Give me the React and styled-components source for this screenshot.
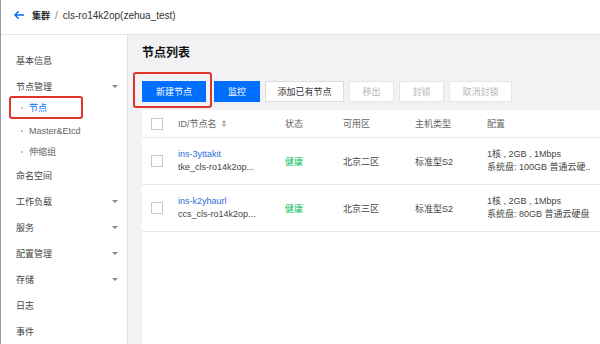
import React from 'react';
import styled, { createGlobalStyle, css } from 'styled-components';

const GlobalStyle = createGlobalStyle`
    html, body {
        margin: 0;
        padding: 0;
        background: #ffffff;
    }
    body {
        width: 600px;
        height: 344px;
        overflow: hidden;
        font-family: "Liberation Sans", "Noto Sans CJK SC", sans-serif;
        font-size: 9px;
        color: #333333;
    }
`;

const navItems = [
    { label: '基本信息' },
    { label: '节点管理', caret: true, children: [
        { label: '节点', active: true },
        { label: 'Master&Etcd' },
        { label: '伸缩组' },
    ] },
    { label: '命名空间' },
    { label: '工作负载', caret: true },
    { label: '服务', caret: true },
    { label: '配置管理', caret: true },
    { label: '存储', caret: true },
    { label: '日志' },
    { label: '事件' },
];

const nodes = [
    { id: 'ins-3yttakit', name: 'tke_cls-ro14k2op...', status: '健康', zone: '北京二区', type: '标准型S2', spec: '1核 , 2GB , 1Mbps', disk: '系统盘: 100GB 普通云硬..' },
    { id: 'ins-k2yhaurl', name: 'ccs_cls-ro14k2op...', status: '健康', zone: '北京三区', type: '标准型S2', spec: '1核 , 2GB , 1Mbps', disk: '系统盘: 80GB 普通云硬盘' },
];

export default function App() {
    return (
        <>
            <GlobalStyle />
            <Page>
                <Header>
                    <BackIcon viewBox="0 0 12 10" width="11" height="10">
                        <path d="M5 1 L1 5 L5 9 M1 5 H11" fill="none" stroke="#006eff" strokeWidth="1.6" />
                    </BackIcon>
                    <Crumb>集群</Crumb>
                    <Slash>/</Slash>
                    <ClusterName>cls-ro14k2op(zehua_test)</ClusterName>
                </Header>
                <Body>
                    <Sidebar>
                        {navItems.map((item) => (
                            <React.Fragment key={item.label}>
                                <NavItem>
                                    {item.label}
                                    {item.caret && <Caret />}
                                </NavItem>
                                {item.children && item.children.map((sub) => (
                                    <SubItem key={sub.label} $active={sub.active}>
                                        <Dot />
                                        {sub.label}
                                    </SubItem>
                                ))}
                            </React.Fragment>
                        ))}
                    </Sidebar>
                    <Main>
                        <Title>节点列表</Title>
                        <Toolbar>
                            <Highlight>
                                <Button $variant="primary" $width={64}>新建节点</Button>
                            </Highlight>
                            <Button $variant="primary" $width={46}>监控</Button>
                            <Button $width={79}>添加已有节点</Button>
                            <Button $variant="disabled" $width={45}>移出</Button>
                            <Button $variant="disabled" $width={45}>封锁</Button>
                            <Button $variant="disabled" $width={63}>取消封锁</Button>
                        </Toolbar>
                        <Card>
                            <HeadRow>
                                <Cell><Checkbox /></Cell>
                                <Cell>ID/节点名<SortIcon /></Cell>
                                <Cell>状态</Cell>
                                <Cell>可用区</Cell>
                                <Cell>主机类型</Cell>
                                <Cell>配置</Cell>
                            </HeadRow>
                            {nodes.map((n) => (
                                <Row key={n.id}>
                                    <Cell><Checkbox /></Cell>
                                    <Cell>
                                        <Stack>
                                            <Link>{n.id}</Link>
                                            <Line>{n.name}</Line>
                                        </Stack>
                                    </Cell>
                                    <Cell><Status>{n.status}</Status></Cell>
                                    <Cell>{n.zone}</Cell>
                                    <Cell>{n.type}</Cell>
                                    <Cell>
                                        <Stack>
                                            <Line>{n.spec}</Line>
                                            <Line>{n.disk}</Line>
                                        </Stack>
                                    </Cell>
                                </Row>
                            ))}
                        </Card>
                    </Main>
                </Body>
            </Page>
        </>
    );
}

const Page = styled.div`
    height: 344px;
    display: grid;
    grid-template-rows: 35px 1fr;
    border-left: 1px solid #9a9a9a;
    box-sizing: border-box;
`;

const Header = styled.header`
    display: flex;
    align-items: center;
    padding: 0 0 4px 13px;
    border-bottom: 1px solid #e6e6e6;
    box-sizing: border-box;
    background: #ffffff;
`;

const BackIcon = styled.svg`
    margin-right: 7px;
`;

const Crumb = styled.span`
    font-size: 9px;
    font-weight: bold;
    color: #2a2a2a;
`;

const Slash = styled.span`
    margin: 0 5px;
    color: #888888;
    font-size: 10px;
`;

const ClusterName = styled.span`
    font-size: 10px;
    color: #333333;
`;

const Body = styled.div`
    display: grid;
    grid-template-columns: 127px 1fr;
    min-height: 0;
`;

const Sidebar = styled.nav`
    background: #ffffff;
    border-right: 1px solid #e3e3e3;
    padding-top: 12px;
    box-sizing: border-box;
`;

const NavItem = styled.div`
    height: 26px;
    display: flex;
    align-items: center;
    justify-content: space-between;
    padding: 0 9px 0 15px;
    color: #444444;
    font-size: 9px;
`;

const Caret = styled.span`
    width: 0;
    height: 0;
    border-left: 3px solid transparent;
    border-right: 3px solid transparent;
    border-top: 3px solid #888888;
`;

const SubItem = styled.div`
    height: 21px;
    display: flex;
    align-items: center;
    padding-left: 20px;
    color: #666666;
    font-size: 9px;
    box-sizing: border-box;

    ${({ $active }) => $active && css`
        color: #006eff;
        width: 74px;
        height: 23px;
        margin: -3px 0 1px 8px;
        padding-left: 10px;
        border: 2px solid #e0342c;
        border-radius: 3px;
    `}
`;

const Dot = styled.span`
    width: 2px;
    height: 2px;
    border-radius: 50%;
    background: #b0b0b0;
    margin-right: 6px;
`;

const Main = styled.main`
    background: #f2f2f4;
    padding-left: 14px;
    display: flex;
    flex-direction: column;
    min-width: 0;
`;

const Title = styled.h2`
    margin: 0;
    padding-top: 11px;
    font-size: 12px;
    line-height: 14px;
    font-weight: bold;
    color: #111111;
`;

const Toolbar = styled.div`
    display: flex;
    gap: 5px;
    margin-top: 21px;
    height: 21px;
`;

const Highlight = styled.div`
    display: flex;
    margin: -9px -3px -6px -9px;
    padding: 7px 4px 4px 7px;
    border: 2px solid #e0342c;
    border-radius: 3px;
`;

const buttonVariants = {
    primary: css`
        background: #006eff;
        border-color: #006eff;
        color: #ffffff;
    `,
    default: css`
        background: #ffffff;
        border-color: #dddddd;
        color: #333333;
    `,
    disabled: css`
        background: #ffffff;
        border-color: #e6e6e6;
        color: #b5b5b5;
    `,
};

const Button = styled.button`
    width: ${({ $width }) => $width}px;
    height: 21px;
    padding: 0;
    border: 1px solid;
    border-radius: 0;
    font-family: inherit;
    font-size: 9px;
    ${({ $variant }) => buttonVariants[$variant || 'default']}
`;

const Card = styled.section`
    margin-top: 8px;
    flex: 1;
    background: #ffffff;
`;

const columns = '36px 107px 58px 72px 72px 1fr';

const HeadRow = styled.div`
    display: grid;
    grid-template-columns: ${columns};
    height: 27px;
    align-items: center;
    border-bottom: 1px solid #e8e8e8;
    color: #666666;
    font-size: 9px;
`;

const Row = styled.div`
    display: grid;
    grid-template-columns: ${columns};
    height: 46px;
    align-items: center;
    border-bottom: 1px solid #e8e8e8;
    color: #444444;
    font-size: 9px;
`;

const Cell = styled.div`
    display: flex;
    align-items: center;
    min-width: 0;

    &:first-child {
        padding-left: 9px;
    }
`;

const Checkbox = styled.span`
    width: 10px;
    height: 10px;
    border: 1px solid #c8c8c8;
    background: #ffffff;
`;

const SortIcon = styled.span`
    display: inline-flex;
    flex-direction: column;
    gap: 1px;
    margin-left: 5px;

    &::before, &::after {
        content: '';
        width: 0;
        height: 0;
        border-left: 2.5px solid transparent;
        border-right: 2.5px solid transparent;
    }
    &::before {
        border-bottom: 3px solid #999999;
    }
    &::after {
        border-top: 3px solid #999999;
    }
`;

const Stack = styled.div`
    display: flex;
    flex-direction: column;
    line-height: 13px;
    min-width: 0;
`;

const Line = styled.span`
    white-space: nowrap;
`;

const Link = styled.span`
    color: #2a6fd6;
`;

const Status = styled.span`
    color: #0abf5b;
`;
